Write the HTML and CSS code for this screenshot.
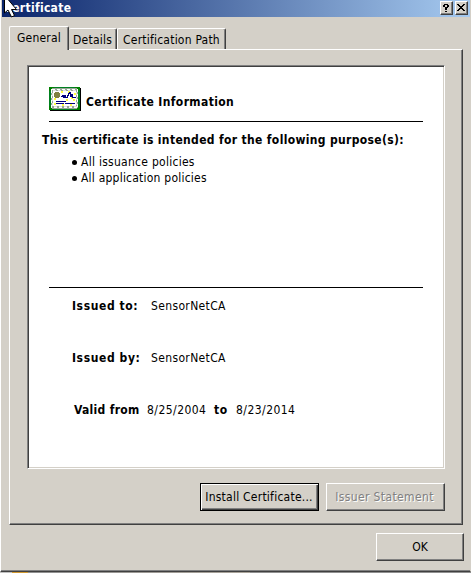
FILE: index.html
```
<!DOCTYPE html>
<html lang="en">
<head>
<meta charset="utf-8">
<title>Certificate</title>
<link rel="stylesheet" href="styles.css">
</head>
<body>
<div class="window">
  <header class="titlebar">
    <h1 class="title">Certificate</h1>
    <div class="controls">
      <button class="control" aria-label="Help"><svg width="11" height="11" viewBox="0 0 11 11" shape-rendering="crispEdges"><path d="M3 1h4v1h1v2H7v1H6v2H4V4h2V2H4v2H2V2h1zM4 8h2v1H4z"/></svg></button>
      <button class="control" aria-label="Close"><svg width="11" height="11" viewBox="0 0 11 11" shape-rendering="crispEdges"><path d="M1 1h2v1h1v1h2V2h1V1h2v1H8v1H7v1H6v1h1v1h1v1h1v1H7V7H6V6H4v1H3v1H1V7h1V6h1V5h1V4H3V3H2V2H1z"/></svg></button>
    </div>
  </header>
  <svg class="pointer" width="16" height="20" viewBox="0 0 16 20"><path d="M.5-4V13L4 10L7.500 17L10.500 15.500L7.500 9.500H12.500L2-3Z" fill="#fff" stroke="#000"/></svg>
  <nav class="tabs">
    <div class="tab tab-active"><span class="t-general">General</span></div>
    <div class="tab tab-details"><span class="t-details">Details</span></div>
    <div class="tab tab-path"><span class="t-path">Certification Path</span></div>
  </nav>
  <main class="panel">
    <section class="sheet">
      <div class="heading">
        <svg class="cert" width="32" height="24" viewBox="0 0 32 24" shape-rendering="crispEdges">
          <path d="M1 1h31v23H1z"/><path d="M0 0h31v23H0z" fill="#008020"/>
          <path d="M2 1h27v21H2z" fill="#98a898"/>
          <path d="M2.500 2.500h26v18h-26z" fill="none" stroke="#fff" stroke-width="1" stroke-dasharray="3 2"/>
          <path d="M3.500 3.500h24v16h-24z" fill="none" stroke="#e0e0e0" stroke-width="1" stroke-dasharray="3 2"/>
          <path d="M0 0h5v1H3v1H2v2H0zM31 0h-5v1h2v1h1v2h2zM0 23h5v-1H3v-1H2v-2H0zM31 23h-5v-1h2v-1h1v-2h2z" fill="#008000"/>
          <path d="M4 4h23v15H4z" fill="#fff"/>
          <path d="M12 5h2M19 5h2M25 7h2M5 12h2M17 13h2M24 13h2M5 17h2M13 18h2M21 18h2M22 11h2" stroke="#ffff40" stroke-width="1.500"/>
          <path d="M6 5h4v1h1v4h-1v1H6v-1H5V6h1z" fill="#808040"/>
          <path d="M11.500 9.500h2v-1h1v2h1v-2h1v2h2v-2h1v-2h1v-1h1v4h1v-2h1v3h3" fill="none" stroke="#000080"/>
          <path d="M7 14.500h10M7 16.500h8M16 16.500h10" stroke="#000080"/>
        </svg>
        <h2 class="info">Certificate Information</h2>
      </div>
      <h3 class="purpose">This certificate is intended for the following purpose(s):</h3>
      <ul class="policies">
        <li><span class="t-issuance">All issuance policies</span></li>
        <li><span class="t-application">All application policies</span></li>
      </ul>
      <div class="details">
        <p class="row"><b class="label">Issued to:</b><span class="name">SensorNetCA</span></p>
        <p class="row"><b class="label">Issued by:</b><span class="name">SensorNetCA</span></p>
        <p class="row validity"><b class="t-valid">Valid from</b><span class="date">8/25/2004</span><b class="t-and">to</b><span class="date">8/23/2014</span></p>
      </div>
    </section>
    <div class="actions">
      <button class="button default"><span class="t-install">Install Certificate...</span></button>
      <button class="button disabled" disabled><span class="t-issuer">Issuer Statement</span></button>
    </div>
  </main>
  <footer class="footer"><button class="button ok">OK</button></footer>
</div>
<div class="backdrop"></div>
</body>
</html>
```
FILE: styles.css
```
* { box-sizing: border-box; }
body {
  margin: 0;
  width: 471px;
  height: 573px;
  overflow: hidden;
  background: #808080;
  color: #000;
  font: 12px/16px "DejaVu Sans Condensed", "DejaVu Sans", sans-serif;
  font-stretch: condensed;
}
h1, h2, h3, p, ul { margin: 0; padding: 0; font-size: inherit; }
span, b, h2, h3 { white-space: nowrap; }
.window {
  position: relative;
  height: 572px;
  background: #d4d0c8;
  border-left: 1px solid #fff;
  border-right: 1px solid #d4d0c8;
  border-bottom: 1px solid #404040;
  box-shadow: inset 0 -1px #808080;
}
.titlebar {
  display: flex;
  justify-content: space-between;
  height: 17px;
  margin-left: 1px;
  background: linear-gradient(90deg, #0a246a, #a6caf0);
}
.title { padding-left: 2px; color: #fff; font-weight: bold; letter-spacing: .3px; }
.controls { display: flex; gap: 2px; padding: 1px 2px 0 0; }
.control {
  width: 13px;
  height: 14px;
  padding: 0;
  background: #d4d0c8;
  border: 1px solid;
  border-color: #fff #404040 #404040 #fff;
  box-shadow: inset -1px -1px #808080;
}
.control svg { display: block; }
.pointer { position: absolute; left: 3px; top: 0; }
.tabs { display: flex; align-items: flex-end; height: 32px; padding-left: 8px; }
.tab {
  height: 21px;
  padding: 3px 0 0 4px;
  border: 1px solid #fff;
  border-right-color: #404040;
  border-bottom: 0;
  border-radius: 2px 2px 0 0;
  box-shadow: inset -1px 0 #808080;
}
.tab-active {
  position: relative;
  width: 60px;
  height: 24px;
  margin-bottom: -1px;
  padding: 3px 0 0 7px;
  background: #d4d0c8;
}
.tab-details { width: 48px; border-left: 0; }
.tab-path { width: 109px; padding-left: 5px; }
.t-general { letter-spacing: .2px; }
.t-details { letter-spacing: .25px; }
.t-path { letter-spacing: .22px; }
.panel {
  width: 454px;
  height: 476px;
  margin-left: 8px;
  padding: 15px 0 0 17px;
  border: 1px solid;
  border-color: #fff #404040 #404040 #fff;
  box-shadow: inset -1px -1px #808080;
}
.sheet {
  width: 418px;
  height: 404px;
  padding: 20px 20px 0;
  background: #fff;
  border: 1px solid;
  border-color: #808080 #fff #fff #808080;
  box-shadow: inset 1px 1px #404040, inset -1px -1px #d4d0c8;
}
.heading { display: flex; gap: 5px; height: 36px; margin-left: 1px; border-bottom: 1px solid #000; width: 374px; }
.cert { margin-top: 1px; }
.info { padding-top: 8px; letter-spacing: .38px; }
.purpose { margin: 10px 0 0 -6px; letter-spacing: .34px; }
.policies { height: 133px; margin: 6px 0 0 24px; list-style: none; }
.policies li { display: flex; align-items: center; gap: 4px; height: 16px; }
.policies li::before { content: ""; width: 5px; height: 5px; border-radius: 50%; background: #000; }
.t-issuance { letter-spacing: .27px; }
.t-application { letter-spacing: .22px; }
.details { width: 374px; margin-left: 1px; padding: 10px 0 0 23px; border-top: 1px solid #000; }
.row { display: flex; height: 52px; }
.label { width: 79px; letter-spacing: .6px; }
.name { letter-spacing: .36px; }
.validity { padding-left: 2px; }
.t-valid { width: 73px; letter-spacing: .3px; }
.date { width: 67px; letter-spacing: .45px; }
.t-and { width: 22px; letter-spacing: .5px; }
.actions { display: flex; gap: 7px; margin: 14px 0 0 173px; }
.button {
  width: 119px;
  height: 28px;
  padding: 0;
  color: #000;
  font: inherit;
  background: #d4d0c8;
  border: 1px solid;
  border-color: #fff #404040 #404040 #fff;
  box-shadow: inset -1px -1px #808080;
}
.default { padding-right: 1px; border-color: #000; box-shadow: inset 1px 1px #fff, inset -1px -1px #404040, inset -2px -2px #808080; }
.disabled { padding-right: 2px; color: #808080; text-shadow: 1px 1px #fff; }
.t-install { letter-spacing: .24px; }
.t-issuer { letter-spacing: .38px; }
.footer { display: flex; justify-content: flex-end; padding: 8px 6px 0 0; }
.ok { width: 88px; }
.backdrop { height: 1px; background: linear-gradient(90deg, #c0c0c0 12px, #d09830 12px 28px, #909090 28px 45px, #aaa49a 250px, #909090 250px); }
```
